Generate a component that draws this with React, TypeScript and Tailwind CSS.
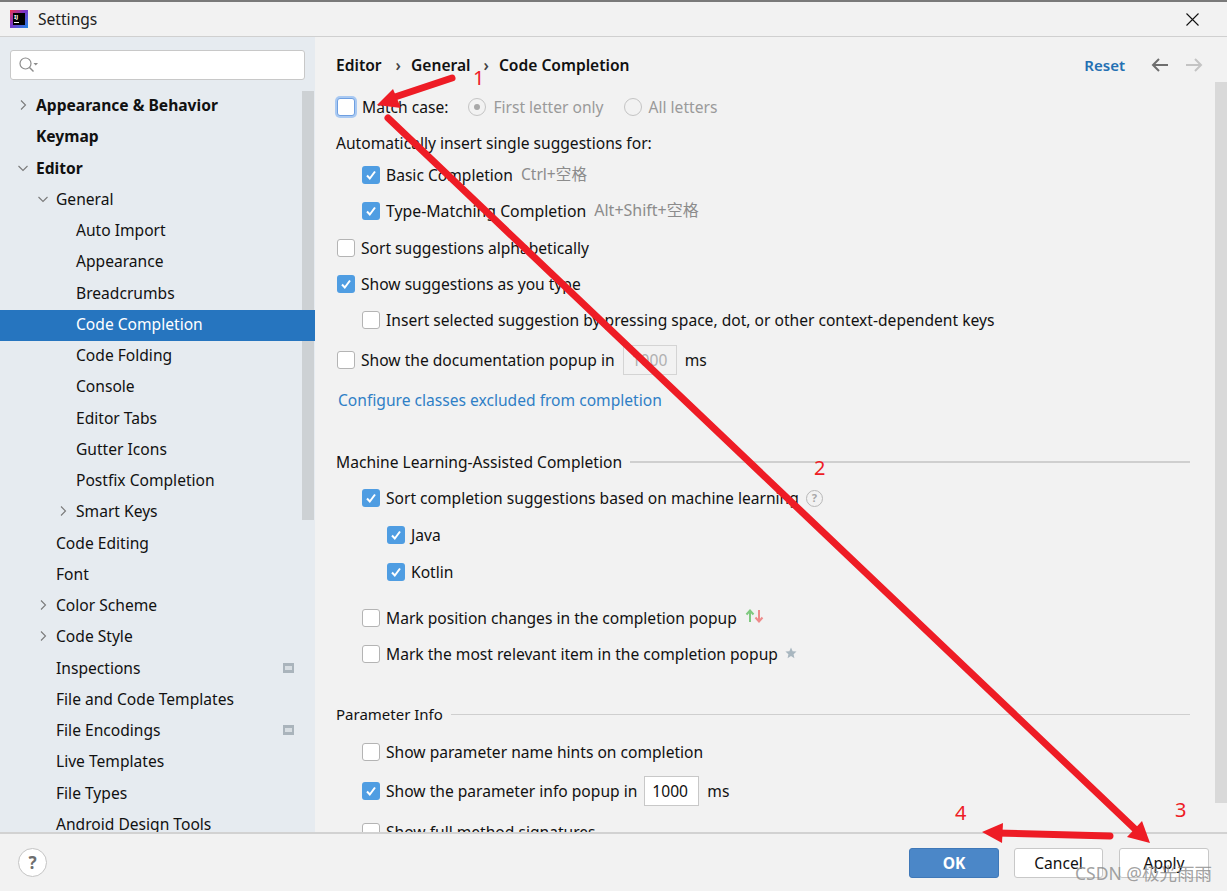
import React from "react";

const font = "font-['Noto_Sans','Noto_Sans_CJK_SC',sans-serif]";

function Box({ checked, focus }: { checked?: boolean; focus?: boolean }) {
  if (checked)
    return (
      <span className="flex h-[18px] w-[18px] shrink-0 items-center justify-center rounded-[3px] bg-[#4f9de2]">
        <svg width="12" height="12" viewBox="0 0 12 12" fill="none">
          <path d="M2 6.5 L4.8 9.5 L10 2.5" stroke="#fff" strokeWidth="2" />
        </svg>
      </span>
    );
  return (
    <span
      className={
        focus
          ? "block h-[18px] w-[18px] shrink-0 rounded-[3px] border border-[#6f9fe0] bg-white shadow-[0_0_0_2px_#a9c9f2]"
          : "block h-[18px] w-[18px] shrink-0 rounded-[3px] border border-[#b4b4b4] bg-white"
      }
    />
  );
}

function Chevron({ open }: { open?: boolean }) {
  return (
    <svg width="10" height="10" viewBox="0 0 10 10" fill="none" className="shrink-0">
      <path d={open ? "M0.5 3 L5 7.5 L9.5 3" : "M3 0.5 L7.5 5 L3 9.5"} stroke="#7a7a7a" strokeWidth="1.1" />
    </svg>
  );
}

function Radio({ on }: { on?: boolean }) {
  return (
    <span className="flex h-[18px] w-[18px] shrink-0 items-center justify-center rounded-full border border-[#c4c4c4] bg-[#f2f2f2]">
      {on && <span className="h-[6px] w-[6px] rounded-full bg-[#a8a8a8]" />}
    </span>
  );
}

type Item = { t: string; l: 0 | 1 | 2; bold?: boolean; ch?: "o" | "c"; sel?: boolean; mark?: boolean };
const items: Item[] = [
  { t: "Appearance & Behavior", l: 0, bold: true, ch: "c" },
  { t: "Keymap", l: 0, bold: true },
  { t: "Editor", l: 0, bold: true, ch: "o" },
  { t: "General", l: 1, ch: "o" },
  { t: "Auto Import", l: 2 },
  { t: "Appearance", l: 2 },
  { t: "Breadcrumbs", l: 2 },
  { t: "Code Completion", l: 2, sel: true },
  { t: "Code Folding", l: 2 },
  { t: "Console", l: 2 },
  { t: "Editor Tabs", l: 2 },
  { t: "Gutter Icons", l: 2 },
  { t: "Postfix Completion", l: 2 },
  { t: "Smart Keys", l: 2, ch: "c" },
  { t: "Code Editing", l: 1 },
  { t: "Font", l: 1 },
  { t: "Color Scheme", l: 1, ch: "c" },
  { t: "Code Style", l: 1, ch: "c" },
  { t: "Inspections", l: 1, mark: true },
  { t: "File and Code Templates", l: 1 },
  { t: "File Encodings", l: 1, mark: true },
  { t: "Live Templates", l: 1 },
  { t: "File Types", l: 1 },
  { t: "Android Design Tools", l: 1 },
];

function TreeRow({ it }: { it: Item }) {
  const pad = it.l === 0 ? "pl-[18px]" : it.l === 1 ? "pl-[38px]" : "pl-[58px]";
  return (
    <div
      className={`relative flex h-[31.25px] shrink-0 items-center pb-[3px] ${pad} pr-[21px] ${it.sel ? "z-10 bg-[#2675bf] text-white" : "text-[#111]"}`}
    >
      <span className="flex w-[18px] shrink-0 items-center">{it.ch && <Chevron open={it.ch === "o"} />}</span>
      <span className={it.bold ? "flex-1 whitespace-nowrap font-bold" : "flex-1 whitespace-nowrap"}>{it.t}</span>
      {it.mark && (
        <span className="flex h-[10px] w-[11px] items-center justify-center bg-[#aab4bc]">
          <span className="h-[4px] w-[7px] bg-[#d8dee3]" />
        </span>
      )}
    </div>
  );
}

function Arrow({ d, head }: { d: string; head: string }) {
  return (
    <g>
      <path d={d} stroke="#ee1c25" strokeWidth="7" strokeLinecap="round" fill="none" />
      <polygon points={head} fill="#ee1c25" />
    </g>
  );
}

export default function App() {
  return (
    <div className={`relative flex h-[891px] w-[1227px] flex-col overflow-hidden bg-[#f2f2f2] text-[15.6px] leading-[20px] text-[#111] ${font}`}>
      {/* title bar */}
      <div className="flex h-[37px] shrink-0 items-center border-t-2 border-b border-t-[#7a7a7a] border-b-[#d0d0d0] pl-[10px] pr-[28px]">
        <span className="flex h-[18px] w-[18px] shrink-0 items-center justify-center bg-[linear-gradient(135deg,#f0364f_0%,#7a35c8_45%,#1e88e5_100%)]">
          <span className="flex h-[12px] w-[12px] flex-col bg-black pl-[1px] text-[6px] font-bold leading-[8px] text-white">
            IJ
            <span className="mt-[1px] h-[1px] w-[5px] bg-white" />
          </span>
        </span>
        <span className="ml-[10px] flex-1 text-[#222]">Settings</span>
        <svg width="13" height="13" viewBox="0 0 13 13" fill="none">
          <path d="M0.5 0.5 L12.5 12.5 M12.5 0.5 L0.5 12.5" stroke="#111" strokeWidth="1.1" />
        </svg>
      </div>

      <div className="flex min-h-0 flex-1">
        {/* sidebar */}
        <aside className="relative flex w-[315px] shrink-0 flex-col overflow-hidden bg-[#e6ebf0]">
          <div className="ml-[10px] mt-[13px] flex h-[30px] w-[295px] shrink-0 items-center gap-[1px] rounded-[3px] border border-[#c8c8c8] bg-white pl-[7px]">
            <svg width="22" height="18" viewBox="0 0 22 18" fill="none">
              <circle cx="7.5" cy="7.5" r="5.5" stroke="#8c8c8c" strokeWidth="1.2" />
              <path d="M11.5 11.5 L15.5 15.5" stroke="#8c8c8c" strokeWidth="1.4" />
              <path d="M15.5 7 L20 7 L17.75 9.5 Z" fill="#8c8c8c" />
            </svg>
          </div>
          <div className="absolute left-[302px] top-[54px] h-[429px] w-[12px] bg-[#cdd1d4]" />
          <div className="mt-[11px] flex flex-col">
            {items.map((it) => (
              <TreeRow key={it.t} it={it} />
            ))}
          </div>
        </aside>

        {/* main */}
        <main className="relative min-w-0 flex-1 overflow-hidden pl-[21px] pr-[37px]">
          <div className="mt-[16px] flex h-[24px] items-center font-semibold">
            <span>Editor</span>
            <span className="ml-[14px] mr-[10px] text-[#444]">›</span>
            <span>General</span>
            <span className="ml-[13px] mr-[10px] text-[#444]">›</span>
            <span>Code Completion</span>
            <span className="ml-auto mr-[-1px] text-[15px] font-semibold text-[#2470b3]">Reset</span>
            <svg width="18" height="14" viewBox="0 0 18 14" fill="none" className="ml-[27px]">
              <path d="M17 7 L2 7 M8 1 L2 7 L8 13" stroke="#6e6e6e" strokeWidth="2" />
            </svg>
            <svg width="18" height="14" viewBox="0 0 18 14" fill="none" className="ml-[16px] mr-[-13px]">
              <path d="M1 7 L16 7 M10 1 L16 7 L10 13" stroke="#c4c4c4" strokeWidth="2" />
            </svg>
          </div>

          <div className="mt-[18px] flex h-[24px] items-center">
            <span className="ml-[1px]"><Box focus /></span>
            <span className="ml-[7px]">Match case:</span>
            <span className="ml-[20px]"><Radio on /></span>
            <span className="ml-[7px] text-[#9a9a9a]">First letter only</span>
            <span className="ml-[20px]"><Radio /></span>
            <span className="ml-[7px] text-[#9a9a9a]">All letters</span>
          </div>
          <div className="mt-[12px] flex h-[24px] items-center">Automatically insert single suggestions for:</div>

          <div className="ml-[26px] mt-[8px] flex h-[24px] items-center gap-[6px]">
            <Box checked /><span>Basic Completion</span>
            <span className="ml-[2px] mb-[2px] text-[#8c8c8c]">Ctrl+空格</span>
          </div>
          <div className="ml-[26px] mt-[12px] flex h-[24px] items-center gap-[6px]">
            <Box checked /><span className="text-[15.8px]">Type-Matching Completion</span>
            <span className="ml-[2px] mb-[2px] text-[16px] text-[#8c8c8c]">Alt+Shift+空格</span>
          </div>
          <div className="ml-[1px] mt-[13px] flex h-[24px] items-center gap-[6px]">
            <Box /><span>Sort suggestions alphabetically</span>
          </div>
          <div className="ml-[1px] mt-[12px] flex h-[24px] items-center gap-[6px]">
            <Box checked /><span>Show suggestions as you type</span>
          </div>
          <div className="ml-[26px] mt-[12px] flex h-[24px] items-center gap-[6px]">
            <Box /><span>Insert selected suggestion by pressing space, dot, or other context-dependent keys</span>
          </div>
          <div className="ml-[1px] mt-[16px] flex h-[24px] items-center gap-[6px]">
            <Box /><span>Show the documentation popup in</span>
            <span className="ml-[2px] flex h-[30px] w-[54px] items-center border border-[#d4d4d4] pl-[8px] text-[#b0b0b0]">1000</span>
            <span className="ml-[2px]">ms</span>
          </div>
          <div className="ml-[2px] mt-[16px] flex h-[24px] items-center text-[#2f7fc6]">Configure classes excluded from completion</div>

          <div className="mt-[38px] flex h-[24px] items-center gap-[8px]">
            <span className="whitespace-nowrap">Machine Learning-Assisted Completion</span>
            <span className="h-[2px] flex-1 bg-[#cfcfcf]" />
          </div>
          <div className="ml-[26px] mt-[12px] flex h-[24px] items-center gap-[6px]">
            <Box checked /><span>Sort completion suggestions based on machine learning</span>
            <span className="ml-[1px] flex h-[17px] w-[17px] items-center justify-center rounded-full border border-[#b8b8b8] text-[11px] font-bold text-[#a8a8a8]">?</span>
          </div>
          <div className="ml-[51px] mt-[13px] flex h-[24px] items-center gap-[6px]">
            <Box checked /><span>Java</span>
          </div>
          <div className="ml-[51px] mt-[13px] flex h-[24px] items-center gap-[6px]">
            <Box checked /><span>Kotlin</span>
          </div>
          <div className="ml-[26px] mt-[22px] flex h-[24px] items-center gap-[6px]">
            <Box /><span>Mark position changes in the completion popup</span>
            <svg width="20" height="14" viewBox="0 0 20 14" fill="none" className="mb-[4px] ml-[2px]">
              <path d="M5 13 L5 2 M1.5 5.5 L5 1.5 L8.5 5.5" stroke="#7fc97f" strokeWidth="2" />
              <path d="M14 1 L14 12 M10.5 8.5 L14 12.5 L17.5 8.5" stroke="#ee8a8a" strokeWidth="2" />
            </svg>
          </div>
          <div className="ml-[26px] mt-[12px] flex h-[24px] items-center gap-[6px]">
            <Box /><span>Mark the most relevant item in the completion popup</span>
            <svg width="12" height="12" viewBox="0 0 12 12" className="mb-[2px] ml-[1px]">
              <polygon points="6,0.5 7.6,4.2 11.5,4.6 8.6,7.2 9.4,11.2 6,9.1 2.6,11.2 3.4,7.2 0.4,4.6 4.4,4.2" fill="#a9b7c0" />
            </svg>
          </div>

          <div className="mt-[36px] flex h-[24px] items-center gap-[8px]">
            <span className="whitespace-nowrap text-[15px]">Parameter Info</span>
            <span className="h-[1px] flex-1 bg-[#cfcfcf]" />
          </div>
          <div className="ml-[26px] mt-[14px] flex h-[24px] items-center gap-[6px]">
            <Box /><span>Show parameter name hints on completion</span>
          </div>
          <div className="ml-[26px] mt-[15px] flex h-[24px] items-center gap-[6px]">
            <Box checked /><span>Show the parameter info popup in</span>
            <span className="ml-[1px] flex h-[30px] w-[55px] items-center border border-[#c8c8c8] bg-white pl-[7px]">1000</span>
            <span className="ml-[2px]">ms</span>
          </div>
          <div className="ml-[26px] mt-[17px] flex h-[24px] items-center gap-[6px]">
            <Box /><span>Show full method signatures</span>
          </div>

          <div className="absolute right-0 top-[45px] h-[721px] w-[12px] bg-[#d9d9d9]" />
        </main>
      </div>

      {/* footer */}
      <footer className="flex h-[59px] shrink-0 items-center border-t-2 border-[#d2d2d2] pl-[18px] pr-[18px]">
        <span className="flex h-[29px] w-[29px] items-center justify-center rounded-full border border-[#c4c4c4] bg-white text-[17px] font-bold text-[#6e6e6e]">?</span>
        <button className="ml-auto h-[30px] w-[90px] rounded-[3px] border border-[#3f78b8] bg-[#4b87c8] font-bold text-white">OK</button>
        <button className="ml-[15px] h-[30px] w-[89px] rounded-[3px] border border-[#c8c8c8] bg-white text-[#111]">Cancel</button>
        <button className="ml-[16px] h-[30px] w-[90px] rounded-[3px] border border-[#c8c8c8] bg-white text-[#111]">Apply</button>
      </footer>

      {/* annotations drawn over the screenshot */}
      <svg className="pointer-events-none absolute left-0 top-0" width="1227" height="891">
        <Arrow d="M452 78 L392 98" head="377,105 393,89 401,108" />
        <Arrow d="M388 118 L1136 830" head="1150,843 1142,821 1127,837" />
        <Arrow d="M1110 836 L996 833" head="982,832 1003,823 1002,843" />
      </svg>
      <span className="absolute left-[473px] top-[66px] text-[20px] leading-[24px] text-[#ee1c25]">1</span>
      <span className="absolute left-[814px] top-[456px] text-[20px] leading-[24px] text-[#ee1c25]">2</span>
      <span className="absolute left-[1175px] top-[798px] text-[20px] leading-[24px] text-[#ee1c25]">3</span>
      <span className="absolute left-[955px] top-[801px] text-[20px] leading-[24px] text-[#ee1c25]">4</span>
      <span className="absolute left-[1075px] top-[861px] text-[17.5px] leading-[24px] text-[#8a8a8a]/80">CSDN @极光雨雨</span>
    </div>
  );
}
